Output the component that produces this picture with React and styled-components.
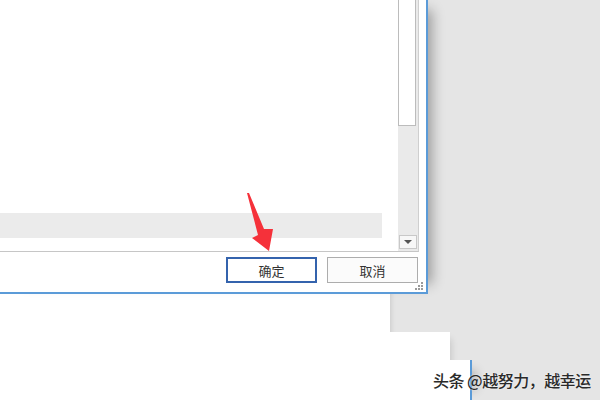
import React from "react";
import styled, { createGlobalStyle } from "styled-components";

const Global = createGlobalStyle`
  html, body { margin: 0; padding: 0; background: #e5e5e5; }
  body { font-family: "Noto Sans CJK SC", "Noto Sans", sans-serif; }
`;

const Desktop = styled.div`
  position: relative;
  width: 600px;
  height: 400px;
  overflow: hidden;
  background: #e5e5e5;
`;

const BackWindow = styled.div`
  position: absolute;
  left: 0;
  top: ${(p) => p.$top}px;
  width: ${(p) => p.$width}px;
  bottom: 0;
  background: #ffffff;
  box-sizing: border-box;
  border-right: ${(p) => (p.$edge ? `2px solid ${p.$edge}` : "none")};
  box-shadow: ${(p) => p.$shadow};
`;

const Dialog = styled.div`
  position: absolute;
  left: 0;
  top: 0;
  width: 428px;
  height: 294px;
  box-sizing: border-box;
  background: #ffffff;
  border-right: 2px solid #5b9bd8;
  border-bottom: 2px solid #5b9bd8;
  padding-right: 7px;
  display: flex;
  flex-direction: column;
  box-shadow: 14px 0 12px -10px rgba(0, 0, 0, 0.32);
`;

const ListBox = styled.div`
  height: 252px;
  box-sizing: border-box;
  display: flex;
  border-right: 1px solid #cfcfcf;
  border-bottom: 1px solid #c6c6c6;
`;

const ListContent = styled.div`
  flex: 1;
  display: flex;
  flex-direction: column;
  justify-content: flex-end;
  padding: 0 16px 13px 0;
`;

const ListRow = styled.div`
  height: 25px;
  background: ${(p) => (p.$selected ? "#ebebeb" : "transparent")};
`;

const Scrollbar = styled.div`
  width: 20px;
  display: flex;
  flex-direction: column;
  background: #eaeaea;
  padding-bottom: 2px;
  box-sizing: border-box;
`;

const Thumb = styled.div`
  height: 126px;
  box-sizing: border-box;
  margin-right: 2px;
  background: #ffffff;
  border: 1px solid #bcbcbc;
  border-top: none;
`;

const Track = styled.div`
  flex: 1;
`;

const ArrowButton = styled.div`
  height: 14px;
  margin: 0 1px 0 1px;
  box-sizing: border-box;
  background: #f7f7f7;
  border: 1px solid #c8c8c8;
  display: flex;
  align-items: center;
  justify-content: center;
`;

const Triangle = styled.span`
  width: 0;
  height: 0;
  border-left: 4px solid transparent;
  border-right: 4px solid transparent;
  border-top: 4px solid #555;
`;

const Footer = styled.div`
  position: relative;
  flex: 1;
  display: flex;
  justify-content: flex-end;
  align-items: flex-start;
  gap: 10px;
  padding-top: 5px;
  padding-right: 1px;
`;

const Button = styled.button`
  width: 91px;
  height: 26px;
  box-sizing: border-box;
  margin: 0;
  padding: 0;
  font-family: "Noto Sans CJK SC", "Noto Sans", sans-serif;
  font-size: 13px;
  color: #333333;
  background: ${(p) => (p.$primary ? "#ffffff" : "#fbfbfb")};
  border: ${(p) => (p.$primary ? "2px solid #3463ad" : "1px solid #adadad")};
  display: flex;
  align-items: center;
  justify-content: center;
`;

const Grip = styled.svg`
  position: absolute;
  right: -5px;
  bottom: 1px;
`;

const Pointer = styled.svg`
  position: absolute;
  left: 0;
  top: 0;
  pointer-events: none;
`;

const Watermark = styled.div`
  position: absolute;
  left: 433px;
  top: 368px;
  font-family: "Noto Sans CJK SC", "Noto Sans", sans-serif;
  font-size: 16px;
  font-weight: 500;
  letter-spacing: -0.5px;
  color: #2a2a2a;
  white-space: nowrap;
  text-shadow: 0 0 2px rgba(255, 255, 255, 0.9);
`;

export default function App() {
  return (
    <>
      <Global />
      <Desktop>
        <BackWindow $top={0} $width={390} $shadow="6px 0 5px -5px rgba(0,0,0,0.12)" />
        <BackWindow $top={332} $width={450} $shadow="8px 0 7px -7px rgba(0,0,0,0.14)" />
        <BackWindow $top={360} $width={472} $edge="#5b9bd8" $shadow="14px 0 11px -11px rgba(0,0,0,0.3)" />
        <Dialog>
          <ListBox>
            <ListContent>
              <ListRow $selected />
            </ListContent>
            <Scrollbar>
              <Thumb />
              <Track />
              <ArrowButton>
                <Triangle />
              </ArrowButton>
            </Scrollbar>
          </ListBox>
          <Footer>
            <Button $primary>确定</Button>
            <Button>取消</Button>
            <Grip width="12" height="10" viewBox="0 0 12 10">
              <g fill="#9a9a9a">
                <rect x="9" y="1" width="2" height="2" />
                <rect x="6" y="4" width="2" height="2" />
                <rect x="9" y="4" width="2" height="2" />
                <rect x="3" y="7" width="2" height="2" />
                <rect x="6" y="7" width="2" height="2" />
                <rect x="9" y="7" width="2" height="2" />
              </g>
            </Grip>
          </Footer>
        </Dialog>
        <Pointer width="600" height="400" viewBox="0 0 600 400">
          <polygon
            points="247,193 249,193 264,229 273,229 269,251 252,238 258,235"
            fill="#f5313a"
          />
        </Pointer>
        <Watermark>头条 @越努力，越幸运</Watermark>
      </Desktop>
    </>
  );
}
